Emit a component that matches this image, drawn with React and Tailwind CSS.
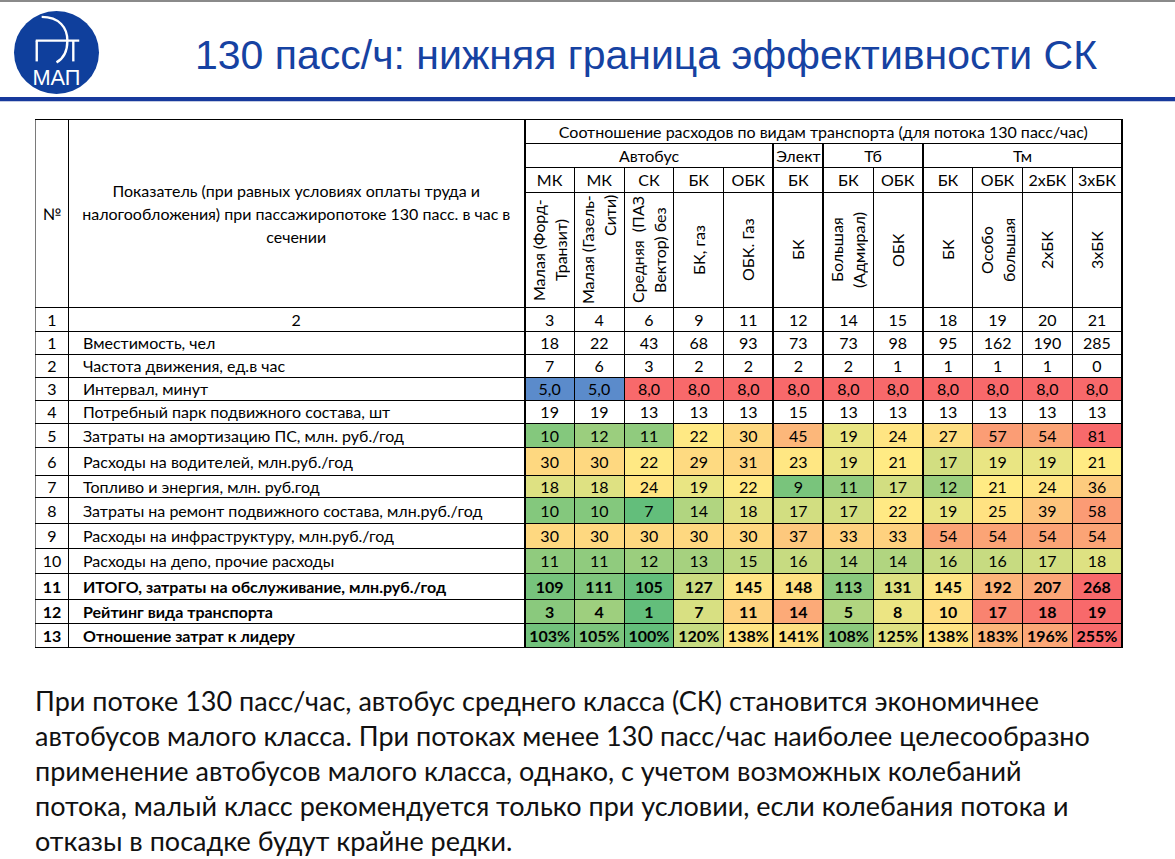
import React from 'react';

const groups = [
  { label: 'Автобус', span: 5, cls: 'border-l-2' },
  { label: 'Элект', span: 1, cls: 'border-l-2' },
  { label: 'Тб', span: 2, cls: 'border-l-2' },
  { label: 'Тм', span: 4, cls: 'border-l-2 border-r-2' },
];

const classes = ['МК', 'МК', 'СК', 'БК', 'ОБК', 'БК', 'БК', 'ОБК', 'БК', 'ОБК', '2хБК', '3хБК'];

// rotated header captions, one entry per line
const captions = [
  { lines: ['Малая (Форд-', 'Транзит)'], align: 'text-center' },
  { lines: ['Малая (Газель-', 'Сити)'], align: 'text-end' },
  { lines: ['Средняя  (ПАЗ', 'Вектор) без'], align: 'text-center' },
  { lines: ['БК, газ'], align: 'text-center' },
  { lines: ['ОБК. Газ'], align: 'text-center' },
  { lines: ['БК'], align: 'text-center' },
  { lines: ['Большая', '(Адмирал)'], align: 'text-center' },
  { lines: ['ОБК'], align: 'text-center' },
  { lines: ['БК'], align: 'text-center' },
  { lines: ['Особо', 'большая'], align: 'text-center' },
  { lines: ['2хБК'], align: 'text-center' },
  { lines: ['3хБК'], align: 'text-center' },
];

const colNums = [3, 4, 6, 9, 11, 12, 14, 15, 18, 19, 20, 21];

const rows = [
  { n: 1, label: 'Вместимость, чел', h: 'h-[23px]', vals: [18, 22, 43, 68, 93, 73, 73, 98, 95, 162, 190, 285] },
  { n: 2, label: 'Частота движения, ед.в час', h: 'h-[23px]', vals: [7, 6, 3, 2, 2, 2, 2, 1, 1, 1, 1, 0] },
  { n: 3, label: 'Интервал, минут', h: 'h-[23px]', vals: [5, 5, 8, 8, 8, 8, 8, 8, 8, 8, 8, 8], interval: true },
  { n: 4, label: 'Потребный парк подвижного состава, шт', h: 'h-[23px]', vals: [19, 19, 13, 13, 13, 15, 13, 13, 13, 13, 13, 13] },
  { n: 5, label: 'Затраты на амортизацию ПС, млн. руб./год', h: 'h-[24px]', vals: [10, 12, 11, 22, 30, 45, 19, 24, 27, 57, 54, 81], block: true },
  { n: 6, label: 'Расходы на водителей, млн.руб./год', h: 'h-[28px]', vals: [30, 30, 22, 29, 31, 23, 19, 21, 17, 19, 19, 21], block: true },
  { n: 7, label: 'Топливо и энергия, млн. руб.год', h: 'h-[22px]', vals: [18, 18, 24, 19, 22, 9, 11, 17, 12, 21, 24, 36], block: true },
  { n: 8, label: 'Затраты на ремонт подвижного состава, млн.руб./год', h: 'h-[26px]', vals: [10, 10, 7, 14, 18, 17, 17, 22, 19, 25, 39, 58], block: true },
  { n: 9, label: 'Расходы на инфраструктуру, млн.руб./год', h: 'h-[25px]', vals: [30, 30, 30, 30, 30, 37, 33, 33, 54, 54, 54, 54], block: true },
  { n: 10, label: 'Расходы на депо, прочие расходы', h: 'h-[25px]', vals: [11, 11, 12, 13, 15, 16, 14, 14, 16, 16, 17, 18], block: true },
  { n: 11, label: 'ИТОГО, затраты на обслуживание, млн.руб./год', h: 'h-[26px]', vals: [109, 111, 105, 127, 145, 148, 113, 131, 145, 192, 207, 268], bold: true },
  { n: 12, label: 'Рейтинг вида транспорта', h: 'h-[24px]', vals: [3, 4, 1, 7, 11, 14, 5, 8, 10, 17, 18, 19], bold: true },
  { n: 13, label: 'Отношение затрат к лидеру', h: 'h-[24px]', vals: [103, 105, 100, 120, 138, 141, 108, 125, 138, 183, 196, 255], bold: true, pct: true },
];

const GREEN = [99, 190, 123];
const YELLOW = [255, 235, 132];
const RED = [248, 105, 107];

function median(list) {
  const s = [...list].sort((a, b) => a - b);
  const i = (s.length - 1) / 2;
  const lo = Math.floor(i);
  const hi = Math.ceil(i);
  return s[lo] + (s[hi] - s[lo]) * (i - lo);
}

function mix(a, b, t) {
  const c = a.map((v, k) => Math.round(v + (b[k] - v) * t));
  return `rgb(${c[0]}, ${c[1]}, ${c[2]})`;
}

// excel-style three colour scale: min green, median yellow, max red
function makeScale(list) {
  const min = Math.min(...list);
  const max = Math.max(...list);
  const mid = median(list);
  return (v) => {
    if (v <= mid) return mix(GREEN, YELLOW, mid === min ? 1 : (v - min) / (mid - min));
    return mix(YELLOW, RED, (v - mid) / (max - mid));
  };
}

const blockScale = makeScale(rows.filter((r) => r.block).flatMap((r) => r.vals));

function cellColour(row, v) {
  if (row.interval) return v === 5 ? '#5b8bcb' : '#f8696b';
  if (row.block) return blockScale(v);
  if (row.bold) return makeScale(row.vals)(v);
  return undefined;
}

function edge(i) {
  let c = '';
  if (i === 0 || i === 5 || i === 6 || i === 8) c += ' border-l-2';
  if (i === 11) c += ' border-r-2';
  return c;
}

function Logo() {
  return (
    <svg width="87" height="85" viewBox="0 0 88 86">
      <ellipse cx="44" cy="43" rx="43" ry="42" fill="#0f3f9c" />
      <g fill="none" stroke="#fff" strokeWidth="2.4">
        <path d="M29 7 C 47 7, 55 18, 55 31 C 55 41, 51 49, 44 53" />
        <path d="M23 31 H 67" />
        <path d="M24 31 V 52" />
        <path d="M61 31 V 52" />
      </g>
      <text x="44" y="76" textAnchor="middle" fill="#fff" fontSize="22" fontFamily="'Liberation Sans', Arial, sans-serif">МАП</text>
    </svg>
  );
}

export default function App() {
  return (
    <div className="w-[1175px] h-[859px] bg-white overflow-hidden border-t-2 border-[#8a8a8a] font-['Lato','Open_Sans',sans-serif] text-black">
      <div className="flex items-start h-[95px]">
        <div className="ml-[13px] mt-[8px] shrink-0">
          <Logo />
        </div>
        <h1 className="ml-[95px] pt-[33px] text-[41px] leading-none text-[#1642a2] font-['Liberation_Sans',Arial,sans-serif] whitespace-nowrap">
          130 пасс/ч: нижняя граница эффективности СК
        </h1>
      </div>
      <div className="h-[4px] bg-[#17399c]" />
      <div className="h-px bg-[#c4cbe3]" />

      <div className="pl-[35px] pt-[17px]">
        <table className="table-fixed border-collapse w-[1087px] text-[16px] leading-tight">
          <colgroup>
            <col className="w-[33px]" />
            <col className="w-[456px]" />
            {classes.map((_, i) => (
              <col key={i} className="w-[49.8px]" />
            ))}
          </colgroup>
          <tbody>
            <tr className="h-[24px]">
              <td rowSpan={4} className="border border-black border-l-[#7a7a7a] text-center">№</td>
              <td rowSpan={4} className="border border-black text-center px-[6px] leading-[23px]">
                Показатель (при равных условиях оплаты труда и
                <br />
                налогообложения) при пассажиропотоке 130 пасс. в час в
                <br />
                сечении
              </td>
              <td colSpan={12} className="border border-black border-l-2 border-r-2 text-center">
                Соотношение расходов по видам транспорта (для потока 130 пасс/час)
              </td>
            </tr>
            <tr className="h-[24px]">
              {groups.map((g) => (
                <td key={g.label} colSpan={g.span} className={`border border-black text-center ${g.cls}`}>
                  {g.label}
                </td>
              ))}
            </tr>
            <tr className="h-[25px]">
              {classes.map((c, i) => (
                <td key={i} className={`border border-black text-center${edge(i)}`}>
                  {c}
                </td>
              ))}
            </tr>
            <tr className="h-[115px]">
              {captions.map((c, i) => (
                <td key={i} className={`border border-black p-0${edge(i)}`}>
                  <div className="h-[112px] flex items-center justify-center">
                    <div className={`[writing-mode:vertical-rl] rotate-180 h-[110px] leading-[22px] ${c.align}`}>
                      {c.lines.map((l, k) => (
                        <div key={k} className="whitespace-pre">{l}</div>
                      ))}
                    </div>
                  </div>
                </td>
              ))}
            </tr>
            <tr className="h-[24px]">
              <td className="border border-black border-l-[#7a7a7a] text-center">1</td>
              <td className="border border-black text-center">2</td>
              {colNums.map((n, i) => (
                <td key={i} className={`border border-black text-center${edge(i)}`}>
                  {n}
                </td>
              ))}
            </tr>
            {rows.map((r) => (
              <tr key={r.n} className={`${r.h} ${r.bold ? 'font-bold' : ''}`}>
                <td className="border border-black border-l-[#7a7a7a] text-center">{r.n}</td>
                <td className="border border-black pl-[14px] whitespace-nowrap">{r.label}</td>
                {r.vals.map((v, i) => (
                  <td
                    key={i}
                    className={`border border-black text-center p-0${edge(i)}`}
                    style={{ backgroundColor: cellColour(r, v) }}
                  >
                    {r.interval ? `${v},0` : r.pct ? `${v}%` : v}
                  </td>
                ))}
              </tr>
            ))}
          </tbody>
        </table>
      </div>

      <div className="pl-[35px] pt-[35px] text-[27px] leading-[35px] text-[#111]">
        <p>При потоке 130 пасс/час, автобус среднего класса (СК) становится экономичнее</p>
        <p>автобусов малого класса. При потоках менее 130 пасс/час наиболее целесообразно</p>
        <p>применение автобусов малого класса, однако, с учетом возможных колебаний</p>
        <p>потока, малый класс рекомендуется только при условии, если колебания потока и</p>
        <p>отказы в посадке будут крайне редки.</p>
      </div>
    </div>
  );
}
